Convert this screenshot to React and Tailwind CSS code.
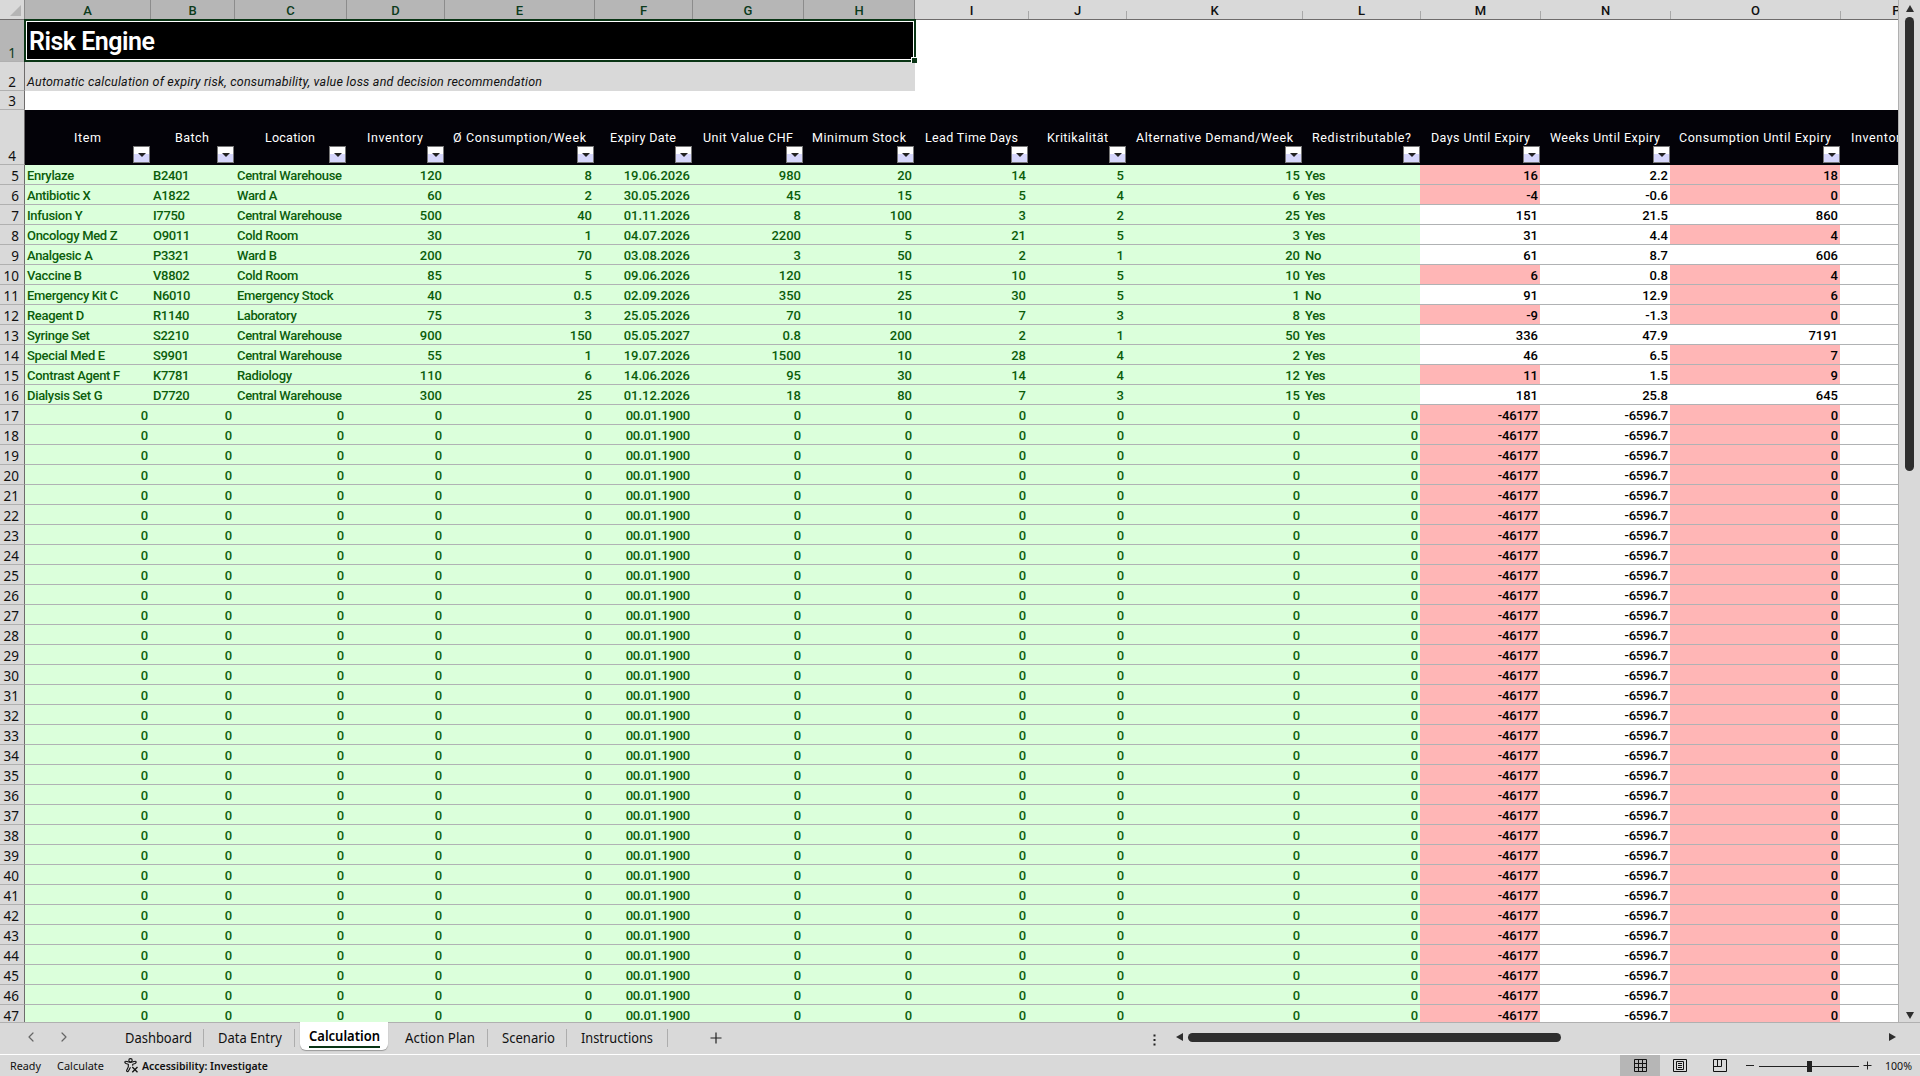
import React from 'react';
import clsx from 'clsx';
import { ChevronLeft, ChevronRight } from 'lucide-react';

const GRID_COLS =
  'grid grid-cols-[24px_126px_84px_112px_98px_150px_98px_111px_111px_114px_98px_176px_118px_120px_130px_170px_112px]';

// width = measured label width, keeps the header captions from drifting
const COLUMNS = [
  { letter: 'A', label: 'Item', width: 27 },
  { letter: 'B', label: 'Batch', width: 34 },
  { letter: 'C', label: 'Location', width: 50 },
  { letter: 'D', label: 'Inventory', width: 56 },
  { letter: 'E', label: 'Ø Consumption/Week', width: 133 },
  { letter: 'F', label: 'Expiry Date', width: 66 },
  { letter: 'G', label: 'Unit Value CHF', width: 90 },
  { letter: 'H', label: 'Minimum Stock', width: 94 },
  { letter: 'I', label: 'Lead Time Days', width: 93 },
  { letter: 'J', label: 'Kritikalität', width: 61 },
  { letter: 'K', label: 'Alternative Demand/Week', width: 157 },
  { letter: 'L', label: 'Redistributable?', width: 99 },
  { letter: 'M', label: 'Days Until Expiry', width: 99 },
  { letter: 'N', label: 'Weeks Until Expiry', width: 110 },
  { letter: 'O', label: 'Consumption Until Expiry', width: 152 },
  { letter: 'P', label: 'Inventory', width: 91, textWidth: 56 },
];

const ITEMS = [
  ['Enrylaze', 'B2401', 'Central Warehouse', '120', '8', '19.06.2026', '980', '20', '14', '5', '15', 'Yes', '16', '2.2', '18'],
  ['Antibiotic X', 'A1822', 'Ward A', '60', '2', '30.05.2026', '45', '15', '5', '4', '6', 'Yes', '-4', '-0.6', '0'],
  ['Infusion Y', 'I7750', 'Central Warehouse', '500', '40', '01.11.2026', '8', '100', '3', '2', '25', 'Yes', '151', '21.5', '860'],
  ['Oncology Med Z', 'O9011', 'Cold Room', '30', '1', '04.07.2026', '2200', '5', '21', '5', '3', 'Yes', '31', '4.4', '4'],
  ['Analgesic A', 'P3321', 'Ward B', '200', '70', '03.08.2026', '3', '50', '2', '1', '20', 'No', '61', '8.7', '606'],
  ['Vaccine B', 'V8802', 'Cold Room', '85', '5', '09.06.2026', '120', '15', '10', '5', '10', 'Yes', '6', '0.8', '4'],
  ['Emergency Kit C', 'N6010', 'Emergency Stock', '40', '0.5', '02.09.2026', '350', '25', '30', '5', '1', 'No', '91', '12.9', '6'],
  ['Reagent D', 'R1140', 'Laboratory', '75', '3', '25.05.2026', '70', '10', '7', '3', '8', 'Yes', '-9', '-1.3', '0'],
  ['Syringe Set', 'S2210', 'Central Warehouse', '900', '150', '05.05.2027', '0.8', '200', '2', '1', '50', 'Yes', '336', '47.9', '7191'],
  ['Special Med E', 'S9901', 'Central Warehouse', '55', '1', '19.07.2026', '1500', '10', '28', '4', '2', 'Yes', '46', '6.5', '7'],
  ['Contrast Agent F', 'K7781', 'Radiology', '110', '6', '14.06.2026', '95', '30', '14', '4', '12', 'Yes', '11', '1.5', '9'],
  ['Dialysis Set G', 'D7720', 'Central Warehouse', '300', '25', '01.12.2026', '18', '80', '7', '3', '15', 'Yes', '181', '25.8', '645'],
];

const EMPTY = ['0', '0', '0', '0', '0', '00.01.1900', '0', '0', '0', '0', '0', '0', '-46177', '-6596.7', '0'];
const ROWS = [...ITEMS, ...Array.from({ length: 31 }, () => EMPTY)];

const isText = (value) => /^[A-Z]/.test(value);

const isAlert = (col, value) => {
  if (col === 12) return Number(value) < 30;
  if (col === 14) return Number(value) < 20;
  return false;
};

const Label = ({ width, textWidth = width, children }) => (
  <svg width={width} height="16" className="block shrink-0 overflow-visible">
    <text x="0" y="12" textLength={textWidth} className="fill-white">
      {children}
    </text>
  </svg>
);

const FilterButton = () => (
  <span className="flex h-[17px] w-[17px] items-center justify-center border border-[#777] bg-linear-to-b from-white from-50% to-[#d6d6fb] to-50%">
    <span className="h-0 w-0 border-x-4 border-t-4 border-x-transparent border-t-[#222]" />
  </span>
);

const ColumnHeader = () => (
  <div className={clsx(GRID_COLS, 'h-5 border-b border-[#6e6c6c] bg-[#d9d9d9] text-[13px] leading-[19px]')}>
    <div className="flex items-end justify-end pr-[3px] pb-[3px]">
      <span className="h-0 w-0 border-b-[11px] border-l-[11px] border-b-[#b5b5b5] border-l-transparent" />
    </div>
    {COLUMNS.map((c, i) => (
      <div
        key={c.letter}
        className={clsx(
          'flex items-end',
          i < 8 ? 'bg-[#b6b6b6] text-[#0c3b1c]' : 'text-[#111]'
        )}
      >
        <span className={clsx('w-px', i < 9 ? 'h-full bg-[#8c8c8c]' : 'h-2 bg-[#a8a8a8]')} />
        <span className="h-[19px] flex-1 pt-px text-center font-medium">{c.letter}</span>
      </div>
    ))}
  </div>
);

const RowNumber = ({ children, selected, className }) => (
  <div
    className={clsx(
      'flex w-[25px] shrink-0 items-end justify-end border-r border-b border-r-[#6e6c6c] border-b-[#b0b0b0] font-[Noto_Sans,sans-serif] text-[13.5px] leading-4',
      selected ? 'bg-[#b6b6b6] text-[#0c3b1c]' : 'bg-[#d9d9d9] text-[#111]',
      className
    )}
  >
    {children}
  </div>
);

const Cell = ({ col, value, dense }) => {
  const green = col < 12;
  return (
    <div
      className={clsx(
        'h-5 border-b border-[#b0b2b4] pt-[3px] pr-[2px] pl-[3px] font-medium whitespace-nowrap',
        green && 'bg-[#dbffdb] text-[#0b5d0b]',
        !green && isAlert(col, value) && 'bg-[#ffb6b6]',
        isText(value) && 'tracking-[-0.32px]',
        !isText(value) && 'text-right',
        dense && 'tracking-[-0.2px]'
      )}
    >
      {value}
    </div>
  );
};

const Sheet = () => (
  <div className="h-[1022px] w-[1899px] shrink-0 overflow-hidden border-r border-[#b0b0b0] bg-white">
    <ColumnHeader />

    <div className="flex h-[42px]">
      <RowNumber selected className="pr-2">1</RowNumber>
      <div className="relative -mt-px -ml-px h-[43px] w-[892px] border-2 border-[#0a3515] bg-black">
        <div className="flex h-full items-center border border-white pt-[2px] pl-[2px] font-[Roboto,sans-serif] text-[25px] font-semibold tracking-[-0.5px] text-white">
          Risk Engine
        </div>
        <span className="absolute -right-[3px] -bottom-[3px] h-[6px] w-[6px] border-t border-l border-white bg-[#0a3515]" />
      </div>
    </div>

    <div className="flex h-[29px]">
      <RowNumber className="pr-2">2</RowNumber>
      <div className="flex w-[890px] items-end bg-[#d9d9d9] pb-px pl-[2px] text-[12.5px] leading-4 italic">
        <svg width="516" height="16" className="block overflow-visible">
          <text x="0" y="12" textLength="515" className="fill-[#111]">
            Automatic calculation of expiry risk, consumability, value loss and decision recommendation
          </text>
        </svg>
      </div>
    </div>

    <div className="flex h-[19px]">
      <RowNumber className="pr-2">3</RowNumber>
    </div>

    <div className={clsx(GRID_COLS, 'h-[55px] bg-[#030208] text-[12.5px]')}>
      <RowNumber className="pr-2">4</RowNumber>
      {COLUMNS.map((c) => (
        <div key={c.letter} className="flex flex-col items-center pt-[20px]">
          <Label width={c.width} textWidth={c.textWidth}>{c.label}</Label>
          <div className="flex w-full justify-end">
            <FilterButton />
          </div>
        </div>
      ))}
    </div>

    {ROWS.map((row, r) => (
      <div key={r} className={clsx(GRID_COLS, 'h-5 text-[13px] leading-4')}>
        <RowNumber className="relative z-10 h-5 pr-[5px]">{r + 5}</RowNumber>
        {row.map((value, col) => (
          <Cell key={col} col={col} value={value} dense={r >= ITEMS.length} />
        ))}
        <div className="h-5 border-b border-[#b0b2b4]" />
      </div>
    ))}
  </div>
);

const VerticalScroll = () => (
  <div className="flex flex-1 flex-col items-center">
    <span className="mt-[5px] h-0 w-0 border-x-[4.5px] border-b-[7px] border-x-transparent border-b-[#2e2e2e]" />
    <span className="mt-[5px] h-[454px] w-[9px] rounded-full bg-[#2e2e2e]" />
    <span className="mt-auto mb-[3px] h-0 w-0 border-x-[4.5px] border-t-[7px] border-x-transparent border-t-[#2e2e2e]" />
  </div>
);

const TABS = [
  { name: 'Dashboard', box: 'w-[91px]', width: 67 },
  { name: 'Data Entry', box: 'w-[91px] pl-[2px]', width: 64 },
  { name: 'Calculation', box: 'w-[96px] pl-[2px]', width: 71, active: true },
  { name: 'Action Plan', box: 'w-[97px] pl-[2px]', width: 70 },
  { name: 'Scenario', box: 'w-[79px] pl-[2px]', width: 53 },
  { name: 'Instructions', box: 'w-[101px]', width: 72 },
];

const SheetTab = ({ name, box, width, active }) => {
  if (active) {
    return (
      <div className={clsx(box, '-mt-px flex h-8 justify-center pb-[4px]')}>
        <div className="flex w-[88px] flex-col items-center rounded-b-md bg-white pt-[6px] shadow-[0_1px_1px_#999]">
          <svg width={width} height="17" className="block overflow-visible">
            <text x="0" y="13" textLength={width} lengthAdjust="spacingAndGlyphs" className="fill-black font-semibold">
              {name}
            </text>
          </svg>
          <span className="mt-px h-[2px] w-[71px] bg-[#0a3515]" />
        </div>
      </div>
    );
  }
  return (
    <div className={clsx(box, 'mt-[6px] flex h-[18px] justify-center border-r border-[#adadad]')}>
      <svg width={width} height="18" className="block overflow-visible">
        <text x="0" y="14" textLength={width} lengthAdjust="spacingAndGlyphs" className="fill-[#111]">
          {name}
        </text>
      </svg>
    </div>
  );
};

const TabBar = () => (
  <div className="flex h-8 border-t border-[#b0b0b0] font-[Noto_Sans,sans-serif] text-[13.5px]">
    <div className="flex w-[113px] items-center gap-[17px] pb-[3px] pl-[23px] text-[#666]">
      <ChevronLeft size={16} strokeWidth={1.8} />
      <ChevronRight size={16} strokeWidth={1.8} />
    </div>
    {TABS.map((tab) => (
      <SheetTab key={tab.name} {...tab} />
    ))}
    <svg width="12" height="12" className="mt-[9px] ml-[42px]" stroke="#222" strokeWidth="1.2">
      <path d="M6 0.5V11.5M0.5 6H11.5" />
    </svg>
    <div className="ml-auto flex items-center pb-[3px]">
      <svg width="3" height="12" className="mt-[5px] mr-[20px]" fill="#222">
        <path d="M0.5 0.5h2v2h-2zM0.5 5h2v2h-2zM0.5 9.5h2v2h-2z" />
      </svg>
      <span className="mr-[5px] h-0 w-0 border-y-[4.5px] border-r-[7px] border-y-transparent border-r-[#2e2e2e]" />
      <span className="h-[9px] w-[373px] rounded-full bg-[#2e2e2e]" />
      <span className="mr-[24px] ml-[328px] h-0 w-0 border-y-[4.5px] border-l-[7px] border-y-transparent border-l-[#2e2e2e]" />
    </div>
  </div>
);

const AccessibilityIcon = () => (
  <svg width="15" height="15" viewBox="0 0 15 15" fill="none" stroke="#111" strokeWidth="1.1">
    <circle cx="6.5" cy="2.3" r="1.7" />
    <path d="M1 3.6c-.5.9.1 1.4 1 1.8l2.3.9v2.6L2.6 12.5c-.2 1 1.2 1.6 1.7.7l2.2-4" />
    <path d="M1 3.6c.6-.7 1.3-.3 2 0 2.3 1 4.7 1 7 0 .8-.3 1.5-.7 2 0 .5.9-.1 1.4-1 1.8l-2.3.9v1.5" />
    <path d="M8.300 9l5.200 5.200M13.500 9l-5.200 5.200" strokeWidth="1.3" />
  </svg>
);

const StatusBar = () => (
  <div className="flex h-[22px] items-center border-t border-white pl-[10px] font-[Noto_Sans,sans-serif] text-[11px] text-[#111]">
    <svg width="260" height="18" className="block" fill="#111">
      <text x="0" y="13" textLength="31" lengthAdjust="spacingAndGlyphs">Ready</text>
      <text x="47" y="13" textLength="47" lengthAdjust="spacingAndGlyphs">Calculate</text>
      <g transform="translate(114 1)">
        <AccessibilityIcon />
      </g>
      <text x="132" y="12.5" textLength="126" lengthAdjust="spacingAndGlyphs" className="font-semibold">
        Accessibility: Investigate
      </text>
    </svg>
    <div className="ml-auto flex h-full items-center">
      <div className="flex h-full w-10 items-center justify-center bg-[#b6b6b6]">
        <svg width="13" height="13" fill="none" stroke="#111">
          <path d="M0.5 0.5h12v12h-12zM4.5 0.5v12M8.5 0.5v12M0.5 4.5h12M0.5 8.5h12" />
        </svg>
      </div>
      <div className="flex w-10 justify-center">
        <svg width="14" height="13" fill="none" stroke="#111">
          <path d="M0.5 0.5h13v12h-13zM3.5 2.5h7v8h-7zM5 4.5h4M5 6.5h4M5 8.5h4" />
        </svg>
      </div>
      <div className="flex w-10 justify-center">
        <svg width="14" height="13" fill="none" stroke="#111">
          <path d="M0.5 0.5h13v12h-13zM4.5 0.5v7M8.5 0.5v7M0.5 7.5h8" />
        </svg>
      </div>
      <svg width="130" height="14" className="ml-[5px]" stroke="#222" fill="none">
        <path d="M1 6.5h8M14 7.5h100M118.5 6.5h8M122.500 2.5v8" />
        <path d="M64.5 2v11" strokeWidth="5" />
      </svg>
      <svg width="35" height="18" className="ml-[10px]" fill="#111">
        <text x="0" y="13" textLength="27" lengthAdjust="spacingAndGlyphs">100%</text>
      </svg>
    </div>
  </div>
);

const App = () => (
  <div className="h-[1076px] w-[1920px] overflow-hidden bg-[#d9d9d9] font-[Roboto,sans-serif] text-black">
    <div className="flex h-[1022px]">
      <Sheet />
      <VerticalScroll />
    </div>
    <TabBar />
    <StatusBar />
  </div>
);

export default App;
